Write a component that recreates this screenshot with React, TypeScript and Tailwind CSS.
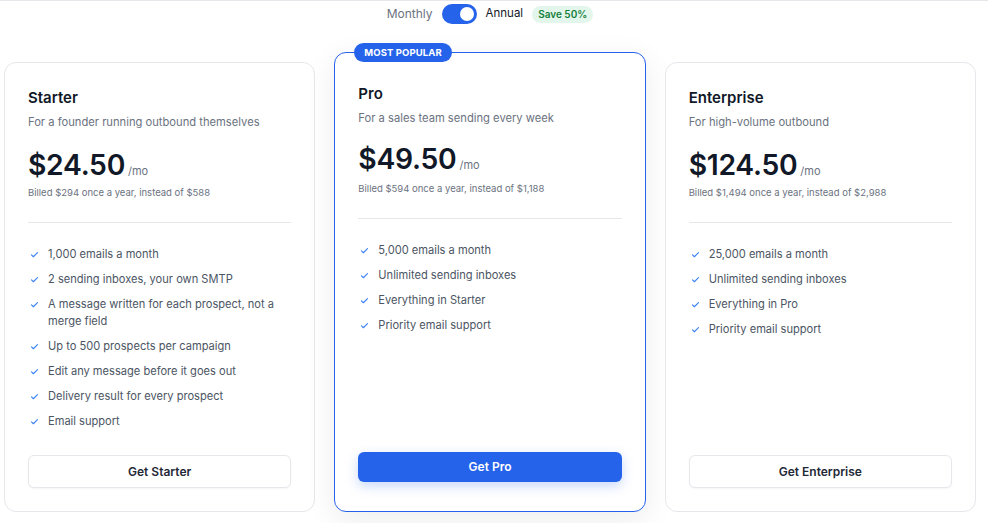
import React, { useState } from "react";

type Plan = {
    name: string;
    tagline: string;
    price: string;
    billed: string;
    features: string[];
    cta: string;
    popular?: boolean;
};

const plans: Plan[] = [
    {
        name: "Starter",
        tagline: "For a founder running outbound themselves",
        price: "$24.50",
        billed: "Billed $294 once a year, instead of $588",
        features: [
            "1,000 emails a month",
            "2 sending inboxes, your own SMTP",
            "A message written for each prospect, not a merge field",
            "Up to 500 prospects per campaign",
            "Edit any message before it goes out",
            "Delivery result for every prospect",
            "Email support",
        ],
        cta: "Get Starter",
    },
    {
        name: "Pro",
        tagline: "For a sales team sending every week",
        price: "$49.50",
        billed: "Billed $594 once a year, instead of $1,188",
        features: [
            "5,000 emails a month",
            "Unlimited sending inboxes",
            "Everything in Starter",
            "Priority email support",
        ],
        cta: "Get Pro",
        popular: true,
    },
    {
        name: "Enterprise",
        tagline: "For high-volume outbound",
        price: "$124.50",
        billed: "Billed $1,494 once a year, instead of $2,988",
        features: [
            "25,000 emails a month",
            "Unlimited sending inboxes",
            "Everything in Pro",
            "Priority email support",
        ],
        cta: "Get Enterprise",
    },
];

const Check = () => (
    <svg
        width="9"
        height="9"
        viewBox="0 0 24 24"
        fill="none"
        stroke="#3b82f6"
        strokeWidth="3"
        strokeLinecap="round"
        strokeLinejoin="round"
        className="mt-[4px] shrink-0"
    >
        <path d="M4 13l5 5L20 7" />
    </svg>
);

const PlanCard = ({ plan }: { plan: Plan }) => {
    return (
        <div
            className={
                plan.popular
                    ? "relative -mt-[10px] flex flex-col rounded-xl border border-[#2563eb] bg-white px-[23px] pt-[30px] pb-[29px] shadow-[0_8px_30px_rgba(17,24,39,0.08)]"
                    : "relative flex flex-col rounded-xl border border-[#e5e7eb] bg-white px-[23px] pt-[24px] pb-[23px]"
            }
        >
            {plan.popular && (
                <span className="absolute -top-[10px] left-[19px] rounded-full bg-[#2563eb] px-[10px] py-[3px] text-[9.5px] font-bold leading-[13px] tracking-[0.01em] text-white">
                    MOST POPULAR
                </span>
            )}
            <h3 className="text-[15px] font-semibold leading-[22px] text-[#111827]">
                {plan.name}
            </h3>
            <p className={plan.popular ? "mt-[4px] text-[11.2px] leading-[18px] text-[#6b7280]" : "mt-[4px] text-[11.2px] leading-[18px] text-[#6b7280]"}>
                {plan.tagline}
            </p>
            <div className={plan.popular ? "mt-[14px] flex items-baseline gap-[3px]" : "mt-[16px] flex items-baseline gap-[3px]"}>
                <span className="text-[28.3px] font-semibold leading-[36px] tracking-[-0.01em] text-[#111827]">
                    {plan.price}
                </span>
                <span className="text-[11px] text-[#6b7280]">/mo</span>
            </div>
            <p className={plan.popular ? "mt-[4px] text-[9.5px] leading-[16px] text-[#6b7280]" : "mt-[2px] text-[9.5px] leading-[16px] text-[#6b7280]"}>
                {plan.billed}
            </p>
            <div className="mt-[21px] h-px bg-[#e5e7eb]" />
            <ul className="mt-[23px] flex flex-col gap-[8px]">
                {plan.features.map((f) => (
                    <li key={f} className="flex gap-[9px] pl-[2px] text-[11.1px] leading-[17px] text-[#4b5563]">
                        <Check />
                        <span>{f}</span>
                    </li>
                ))}
            </ul>
            <div className="mt-auto pt-[25px]">
                {plan.popular ? (
                    <button className="h-[30px] w-full rounded-md bg-[#2563eb] text-[12px] font-semibold text-white shadow-[0_4px_12px_rgba(37,99,235,0.25)]">
                        {plan.cta}
                    </button>
                ) : (
                    <button className="h-[33px] w-full rounded-md border border-[#e5e7eb] bg-white text-[12px] font-semibold text-[#1f2937] shadow-[0_1px_2px_rgba(0,0,0,0.04)]">
                        {plan.cta}
                    </button>
                )}
            </div>
        </div>
    );
};

export default function App() {
    const [annual, setAnnual] = useState(true);

    return (
        <div
            className="min-h-[523px] border-t border-[#e5e7eb] bg-white"
            style={{ fontFamily: "Inter, 'Noto Sans', sans-serif" }}
        >
            <div className="w-[980px]">
                <div className="flex items-center justify-center gap-[9px] pt-[3px]">
                    <span className={annual ? "text-[12px] text-[#6b7280]" : "text-[12px] text-[#111827]"}>
                        Monthly
                    </span>
                    <button
                        onClick={() => setAnnual(!annual)}
                        className="flex h-[20px] w-[35px] items-center rounded-full bg-[#2563eb] px-[3px]"
                    >
                        <span
                            className={
                                annual
                                    ? "ml-auto h-[14px] w-[14px] rounded-full bg-white"
                                    : "h-[14px] w-[14px] rounded-full bg-white"
                            }
                        />
                    </button>
                    <span className={annual ? "text-[11.5px] text-[#111827]" : "text-[11.5px] text-[#6b7280]"}>
                        Annual
                    </span>
                    <span className="rounded-full bg-[#e3f6ec] px-[6px] py-[2px] text-[10px] font-semibold leading-[13px] text-[#15803d]">
                        Save 50%
                    </span>
                </div>

                <div className="mt-[38px] grid grid-cols-3 gap-[19px] px-[4px] pb-[10px]">
                    {plans.map((p) => (
                        <PlanCard key={p.name} plan={p} />
                    ))}
                </div>
            </div>
        </div>
    );
}
